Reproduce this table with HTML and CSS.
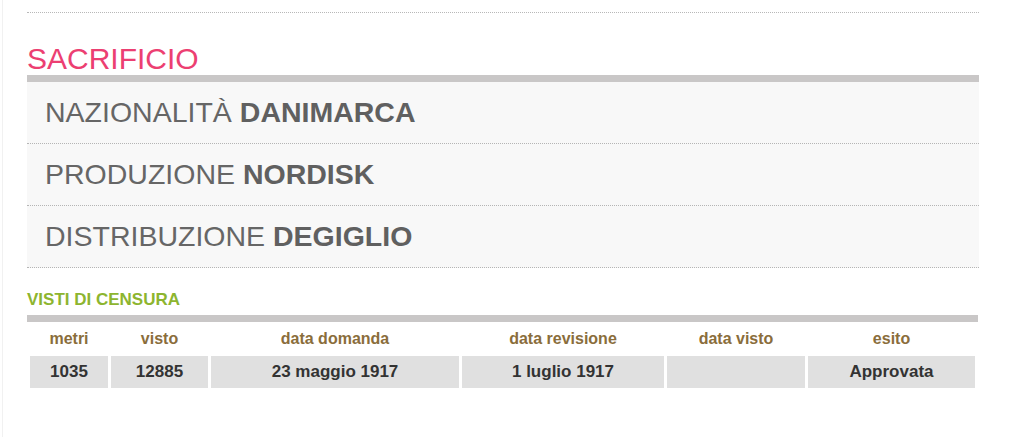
FILE: index.html
```html
<!DOCTYPE html>
<html lang="it">
<head>
<meta charset="utf-8">
<title>Sacrificio</title>
<link rel="stylesheet" href="styles.css">
</head>
<body>
<div class="page">
  <div class="top-rule"></div>
  <h2 class="film-title">SACRIFICIO</h2>
  <div class="info">
    <div class="info-row">NAZIONALITÀ <strong>DANIMARCA</strong></div>
    <div class="info-row">PRODUZIONE <strong>NORDISK</strong></div>
    <div class="info-row">DISTRIBUZIONE <strong>DEGIGLIO</strong></div>
  </div>
  <h3 class="section-title">VISTI DI CENSURA</h3>
  <table class="censura">
    <colgroup>
      <col class="c-metri">
      <col class="c-visto">
      <col class="c-domanda">
      <col class="c-revisione">
      <col class="c-datavisto">
      <col class="c-esito">
    </colgroup>
    <thead>
      <tr>
        <th>metri</th>
        <th>visto</th>
        <th>data domanda</th>
        <th>data revisione</th>
        <th>data visto</th>
        <th>esito</th>
      </tr>
    </thead>
    <tbody>
      <tr>
        <td>1035</td>
        <td>12885</td>
        <td>23 maggio 1917</td>
        <td>1 luglio 1917</td>
        <td></td>
        <td>Approvata</td>
      </tr>
    </tbody>
  </table>
</div>
</body>
</html>
```

FILE: styles.css
```css
html, body {
  margin: 0;
  padding: 0;
  background: #ffffff;
}

body {
  font-family: "Liberation Sans", Arial, sans-serif;
}

.page {
  margin-left: 2px;
  border-left: 1px solid #f1f1f1;
  padding: 12px 0 0 24px;
  min-height: 425px;
}

.top-rule {
  width: 952px;
  border-top: 1px dotted #b8b8b8;
}

.film-title {
  margin: 32px 0 2px 0;
  font-size: 30px;
  line-height: 28px;
  font-weight: normal;
  color: #ec3f72;
}

.info {
  width: 952px;
  border-top: 7px solid #c9c7c7;
}

.info-row {
  height: 61px;
  line-height: 61px;
  padding-left: 18px;
  background: #f8f8f8;
  border-bottom: 1px dotted #b5b5b5;
  font-size: 28.5px;
  color: #666666;
}

.info-row strong {
  font-weight: bold;
  color: #606060;
}

.section-title {
  margin: 22px 0 5px 0;
  font-size: 17px;
  line-height: 20px;
  font-weight: bold;
  color: #8db52f;
}

.censura {
  width: 951px;
  table-layout: fixed;
  border-collapse: separate;
  border-spacing: 3px;
  border-top: 7px solid #c9c7c7;
}

.c-metri { width: 78px; }
.c-visto { width: 97px; }
.c-domanda { width: 248px; }
.c-revisione { width: 202px; }
.c-datavisto { width: 138px; }
.c-esito { width: 167px; }

.censura th {
  height: 28px;
  padding: 0;
  font-size: 16px;
  line-height: 18px;
  font-weight: bold;
  color: #8a6d3b;
  text-align: center;
  vertical-align: middle;
}

.censura td {
  height: 32px;
  padding: 0;
  background: #e0e0e0;
  font-size: 17px;
  line-height: 20px;
  font-weight: bold;
  color: #333333;
  text-align: center;
  vertical-align: middle;
}
```
